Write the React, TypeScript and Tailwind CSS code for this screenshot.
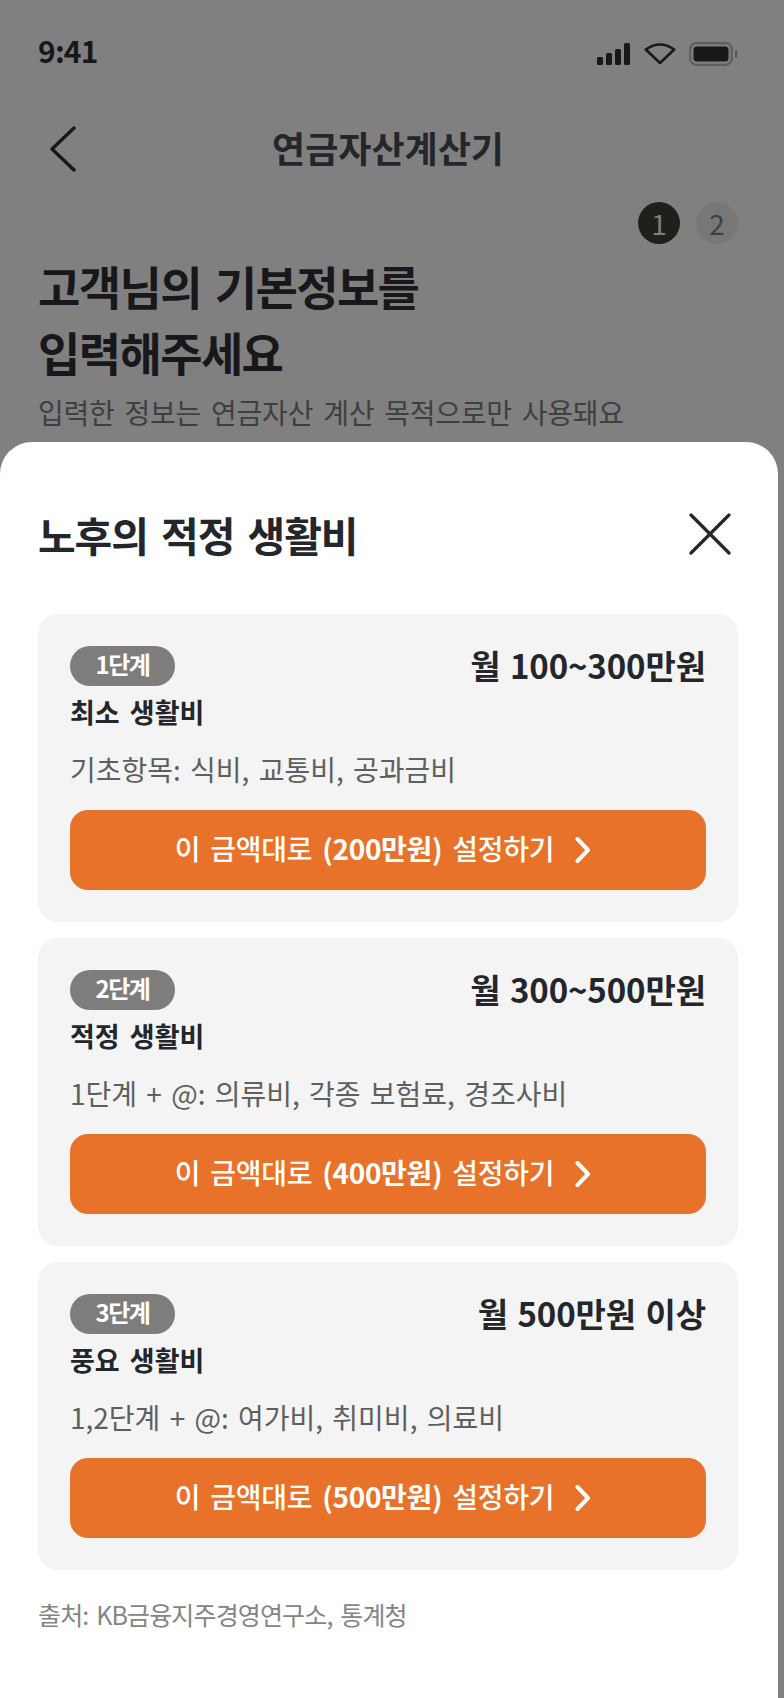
import React from "react";

const font = { fontFamily: '"Noto Sans CJK KR", "Noto Sans", sans-serif' };

const tiers = [
  { step: "1단계", price: "월 100~300만원", name: "최소 생활비", desc: "기초항목: 식비, 교통비, 공과금비", amount: "200만원" },
  { step: "2단계", price: "월 300~500만원", name: "적정 생활비", desc: "1단계 + @: 의류비, 각종 보험료, 경조사비", amount: "400만원" },
  { step: "3단계", price: "월 500만원 이상", name: "풍요 생활비", desc: "1,2단계 + @: 여가비, 취미비, 의료비", amount: "500만원" },
];

function Card({ t }: { t: (typeof tiers)[number] }) {
  return (
    <div className="rounded-[20px] bg-[#f4f4f4] p-8 h-[308px] flex flex-col">
      <div className="flex justify-between items-start h-[40px]">
        <span className="w-[105px] h-[40px] rounded-full bg-[#7f7d7b] text-white text-[24px] font-bold tracking-[-1.5px] flex items-center justify-center leading-none pb-1">
          {t.step}
        </span>
        <span className="text-[33px] font-bold text-[#23262b] tracking-[-0.1px] [word-spacing:2px] leading-[40px] mt-[-1px]">{t.price}</span>
      </div>
      <div className="mt-[6px] text-[27px] font-bold text-[#23262b] tracking-[0px] [word-spacing:4px] leading-[40px]">{t.name}</div>
      <div className="mt-[17px] text-[28px] text-[#5f5f5f] tracking-[0px] [word-spacing:3px] leading-[40px]">{t.desc}</div>
      <div className="mt-[21px] h-[80px] rounded-[18px] bg-[#e8722a] text-white flex items-center justify-center gap-[21px] pr-[10px]">
        <span className="text-[28px] font-medium tracking-[-0.3px] [word-spacing:4px] leading-none mt-[-4px]">
          이 금액대로 <span className="font-bold">({t.amount})</span> 설정하기
        </span>
        <svg width="16" height="28" viewBox="0 0 16 28" fill="none" stroke="#fff" strokeWidth="4" strokeLinecap="round" strokeLinejoin="round">
          <path d="M2.5 3 L13 14 L2.5 25" />
        </svg>
      </div>
    </div>
  );
}

export default function App() {
  return (
    <div className="w-[784px] h-[1698px] bg-[#808080] overflow-hidden" style={font}>
      <div className="h-[442px] pl-[38px] pr-[46px] text-[#18181a] overflow-hidden">
        <div className="h-[107px] flex items-center justify-between">
          <span className="text-[30px] font-bold tracking-[-0.8px] leading-none mt-[-8px]">9:41</span>
          <div className="flex items-center gap-[13px]">
            <svg width="34" height="22" viewBox="0 0 34 22" fill="#18181a">
              <rect x="0" y="14" width="6" height="8" rx="1.5" />
              <rect x="9" y="10" width="6" height="12" rx="1.5" />
              <rect x="18" y="6" width="6" height="16" rx="1.5" />
              <rect x="27" y="0" width="6" height="22" rx="1.5" />
            </svg>
            <svg width="32" height="23" viewBox="0 0 32 23" fill="none" stroke="#18181a" strokeWidth="2.6" strokeLinejoin="round">
              <path d="M1.8 7.5 Q16 -2.5 30.2 7.5 L16 21 Z" />
            </svg>
            <svg width="49" height="24" viewBox="0 0 49 24" fill="none">
              <rect x="1.2" y="1.2" width="41.6" height="21.6" rx="6" stroke="#5e5e5e" strokeWidth="2.2" />
              <rect x="4.5" y="4.5" width="35" height="15" rx="3.5" fill="#18181a" />
              <rect x="46" y="8" width="2.6" height="8" rx="1.3" fill="#5e5e5e" />
            </svg>
          </div>
        </div>
        <div className="relative h-[84px] flex items-center justify-center">
          <svg className="absolute left-[12px] top-[19px]" width="26" height="46" viewBox="0 0 26 46" fill="none" stroke="#18181a" strokeWidth="3.4" strokeLinecap="round" strokeLinejoin="round">
            <path d="M24 2 L2 23 L24 44" />
          </svg>
          <span className="text-[36px] font-bold tracking-[0px] leading-none text-[#23262b] mt-[-4px]">연금자산계산기</span>
        </div>
        <div className="mt-[11px] flex justify-end gap-[16px]">
          <span className="w-[42px] h-[42px] rounded-full bg-[#1f1f1c] text-[#808080] text-[28px] flex items-center justify-center leading-none">1</span>
          <span className="w-[42px] h-[42px] rounded-full bg-[#777777] text-[#3f3f3f] text-[28px] flex items-center justify-center leading-none">2</span>
        </div>
        <h1 className="mt-[8px] text-[46px] font-bold tracking-[-1.6px] [word-spacing:5px] leading-[66px] text-[#18181a] whitespace-nowrap">
          고객님의 기본정보를
          <br />
          입력해주세요
        </h1>
        <p className="mt-[8px] text-[28px] text-[#3f3f3f] tracking-[-0.25px] [word-spacing:4px] leading-[40px] whitespace-nowrap">입력한 정보는 연금자산 계산 목적으로만 사용돼요</p>
      </div>
      <div className="w-[778px] h-[1256px] bg-white rounded-t-[32px] px-[38px]">
        <div className="h-[172px] flex items-center justify-between pr-[9px] pt-[12px]">
          <h2 className="text-[41px] font-bold tracking-[-1.1px] [word-spacing:5px] leading-none text-[#23262b]">노후의 적정 생활비</h2>
          <svg width="42" height="42" viewBox="0 0 42 42" fill="none" stroke="#23262b" strokeWidth="3.2" strokeLinecap="round">
            <path d="M2 2 L40 40 M40 2 L2 40" />
          </svg>
        </div>
        <div className="flex flex-col gap-[16px] w-[700px]">
          {tiers.map((t) => (
            <Card key={t.step} t={t} />
          ))}
        </div>
        <p className="mt-[24px] text-[25px] text-[#858482] tracking-[-0.85px] [word-spacing:3px] leading-[40px]">출처: KB금융지주경영연구소, 통계청</p>
      </div>
    </div>
  );
}
